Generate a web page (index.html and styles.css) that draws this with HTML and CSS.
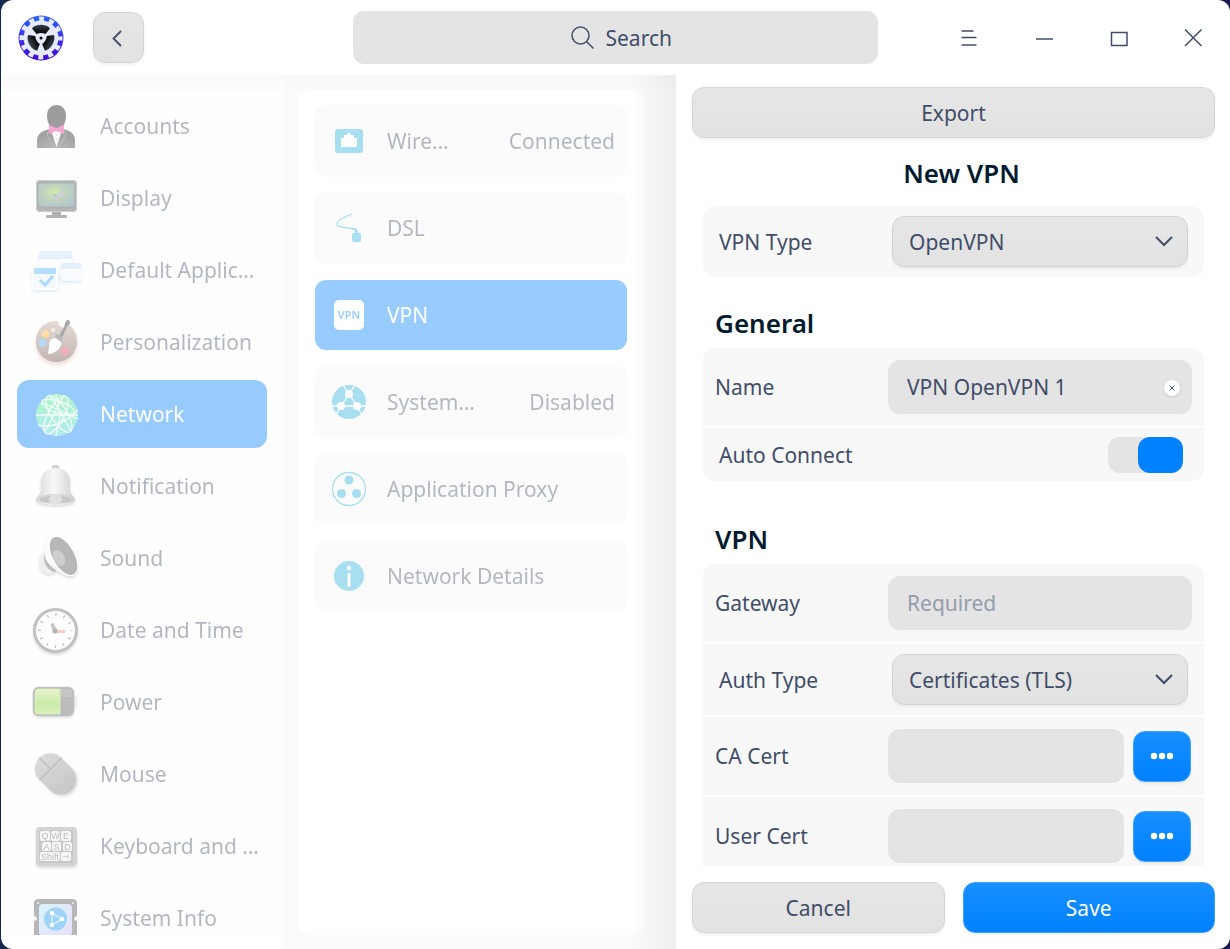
FILE: index.html
```html
<!DOCTYPE html>
<html lang="en">
<head>
  <meta charset="UTF-8">
  <meta name="viewport" content="width=device-width, initial-scale=1.0">
  <title>Control Center - Network</title>
  <link rel="stylesheet" href="styles.css">
</head>
<body>
  <div class="window">
    <header class="titlebar">
      <div class="titlebar-left">
        <svg class="logo" viewBox="0 0 46 46" aria-hidden="true">
          <defs>
            <linearGradient id="logo-ring" x1="0" y1="0" x2="0" y2="1">
              <stop offset="0" stop-color="#2f62ff"/>
              <stop offset="1" stop-color="#4306d8"/>
            </linearGradient>
            <linearGradient id="blade" x1="0" y1="0" x2="0" y2="1">
              <stop offset="0" stop-color="#39424f"/>
              <stop offset="1" stop-color="#000"/>
            </linearGradient>
          </defs>
          <circle cx="23" cy="23" r="22.500" fill="url(#logo-ring)"/>
          <circle cx="23" cy="23" r="18.500" fill="none" stroke="#e6ebfb" stroke-width="6" stroke-dasharray="4.800 4.887" stroke-dashoffset="2.400"/>
          <circle cx="23" cy="23" r="17.500" fill="#e6ebfb"/>
          <path d="M14 13.500C17 8.500 29 8.500 32 13.500L27.500 19C25 17.500 21 17.500 18.500 19Z" fill="url(#blade)"/>
          <path d="M14 13.500C17 8.500 29 8.500 32 13.500L27.500 19C25 17.500 21 17.500 18.500 19Z" fill="url(#blade)" transform="rotate(120 23 23)"/>
          <path d="M14 13.500C17 8.500 29 8.500 32 13.500L27.500 19C25 17.500 21 17.500 18.500 19Z" fill="url(#blade)" transform="rotate(240 23 23)"/>
          <circle cx="23" cy="23" r="1.500" fill="#000"/>
        </svg>
        <button class="btn back-btn" aria-label="Back">
          <svg width="14" height="18" viewBox="0 0 14 18"><path d="M9 2L1.500 9.500L9 17" fill="none" stroke="#414d68" stroke-width="1.800"/></svg>
        </button>
      </div>

      <label class="search">
        <svg width="24" height="24" viewBox="0 0 24 24" aria-hidden="true">
          <circle cx="9.500" cy="9.500" r="8.500"/>
          <path d="M15.500 15.500L22.500 22.500"/>
        </svg>
        <input type="text" placeholder="Search" aria-label="Search">
      </label>

      <div class="window-controls">
        <button aria-label="Menu"><svg width="20" height="20" viewBox="0 0 20 20"><path d="M3.500 3h12M3.500 9.500h15M3.500 17h15"/></svg></button>
        <button aria-label="Minimize"><svg width="20" height="20" viewBox="0 0 20 20"><path d="M3 11h17"/></svg></button>
        <button aria-label="Maximize"><svg width="20" height="20" viewBox="0 0 20 20"><path d="M3.500 4.500h15.500v13h-15.500z"/></svg></button>
        <button aria-label="Close"><svg width="20" height="20" viewBox="0 0 20 20"><path d="M2 1.500l16.500 16.500M18.500 1.500L2 18"/></svg></button>
      </div>
    </header>

    <main class="content">
      <nav class="sidebar" aria-label="Modules">
        <ul class="module-list">
          <li><a href="#accounts" class="module">
            <svg viewBox="0 0 56 56">
              <defs><radialGradient id="suit" cx=".5" cy="1" r=".7"><stop offset="0" stop-color="#555"/><stop offset="1" stop-color="#1c1c1c"/></radialGradient></defs>
              <path d="M9 50V43C9 36 13 33 22 31H35C43 33 47 36 47 43V50Z" fill="url(#suit)"/>
              <path d="M23 32L28.500 49L34 32Z" fill="#fff"/>
              <path d="M22 32C16 35 21 42 28 50M35 32C41 35 36 42 29 50" fill="none" stroke="#666" stroke-width="1"/>
              <path d="M19 18C19 11 23 7 28.500 7S38 11 38 18C38 25 34 32 28.500 32S19 25 19 18Z" fill="#0a0a0a"/>
              <path d="M21 27L28.500 30L36 27V36L28.500 33L21 36Z" fill="#e6268c"/>
              <circle cx="28.500" cy="37" r=".8" fill="#888"/><circle cx="28.500" cy="41" r=".8" fill="#888"/>
            </svg>
            <span>Accounts</span></a></li>
          <li><a href="#display" class="module">
            <svg viewBox="0 0 56 56">
              <defs><radialGradient id="screen" cx=".45" cy=".4" r=".7"><stop offset="0" stop-color="#a2c838"/><stop offset=".5" stop-color="#5f906a"/><stop offset="1" stop-color="#3f7580"/></radialGradient></defs>
              <rect x="24" y="41" width="9" height="6" fill="#3a3a3a"/>
              <rect x="18" y="45" width="21" height="3" rx="1" fill="#444"/>
              <rect x="8" y="10" width="41" height="32" rx="4" fill="#464646"/>
              <rect x="8.500" y="10.500" width="40" height="31" rx="4" fill="none" stroke="#888"/>
              <rect x="10" y="13" width="37" height="24" rx="3" fill="url(#screen)" stroke="#222" stroke-width=".6"/>
              <path d="M24 23L29 25L37 18L34 26L29 28L31 33L26 29Z" fill="#8a84b0"/>
              <path d="M25 23L29 25L28 29Z" fill="#1e9b55"/>
            </svg>
            <span>Display</span></a></li>
          <li><a href="#default-applications" class="module">
            <svg viewBox="0 0 56 56">
              <defs>
                <filter id="soft" x="-30%" y="-30%" width="160%" height="180%"><feDropShadow dx="0" dy="2" stdDeviation="1.500" flood-color="#58a7f5" flood-opacity=".5"/></filter>
                <linearGradient id="pane" x1="0" y1="0" x2="0" y2="1"><stop offset="0" stop-color="#fff"/><stop offset="1" stop-color="#f0f7ff"/></linearGradient>
              </defs>
              <g filter="url(#soft)">
                <rect x="11" y="9" width="33" height="27" rx="3" fill="url(#pane)"/>
                <path d="M11 17V12Q11 9 14 9H41Q44 9 44 12V17Z" fill="#c2dcff"/>
              </g>
              <g filter="url(#soft)">
                <rect x="33" y="21" width="20" height="18" rx="2" fill="url(#pane)"/>
                <path d="M33 27V23Q33 21 35 21H51Q53 21 53 23V27Z" fill="#bddaff"/>
              </g>
              <rect x="4" y="25" width="26" height="23" rx="3" fill="#fff" filter="url(#soft)"/>
              <rect x="6" y="26" width="22" height="20" fill="#e7f4ff"/>
              <rect x="6" y="26" width="22" height="6" fill="#48adff"/>
              <path d="M12 38L17 43L25 34" fill="none" stroke="#3aa6ff" stroke-width="3"/>
            </svg>
            <span>Default Applic…</span></a></li>
          <li><a href="#personalization" class="module">
            <svg viewBox="0 0 56 56">
              <defs>
                <linearGradient id="wood" x1="0" y1="0" x2="0" y2="1"><stop offset="0" stop-color="#c0a798"/><stop offset="1" stop-color="#684b43"/></linearGradient>
                <filter id="warm" x="-20%" y="-20%" width="140%" height="160%"><feDropShadow dx="0" dy="3" stdDeviation="2" flood-color="#b0593a" flood-opacity=".5"/></filter>
              </defs>
              <path d="M28 7C16 7 8 16 8 27.500S17 48 28.500 48S49 39 49 27.500C49 18 44 12 38 9C39 13 36 15 33 13S31 7 28 7Z" fill="url(#wood)" filter="url(#warm)"/>
              <circle cx="25" cy="16" r="3" fill="#d8c5ba" stroke="#8d7163" stroke-width=".6"/>
              <circle cx="17.500" cy="20" r="3.800" fill="#ffae22"/>
              <circle cx="14.500" cy="29" r="3.800" fill="#4ba9f2"/>
              <circle cx="37" cy="37" r="4" fill="#ee3565"/>
              <path d="M31 22L36.500 12L37 9L38.500 6.500Q40 5 41.500 7T41 11L39 13L34 24Z" fill="#2b2b2b"/>
              <path d="M28 20L35 23L33 29L27 25Z" fill="#555"/>
              <path d="M28 24C22 24 21 28 21 32C21 36 20 38 20 40C27 40 34 34 33 28Z" fill="#fff"/>
            </svg>
            <span>Personalization</span></a></li>
          <li><a href="#network" class="module active" aria-current="page">
            <svg viewBox="0 0 56 56">
              <defs><linearGradient id="globe" x1="0" y1="0" x2="0" y2="1"><stop offset="0" stop-color="#36e97e"/><stop offset="1" stop-color="#3fcfd7"/></linearGradient></defs>
              <circle cx="29" cy="29" r="21" fill="url(#globe)"/>
              <g fill="none" stroke="#fff" stroke-width="1.300" opacity=".85">
                <ellipse cx="28" cy="29" rx="8" ry="21" transform="rotate(28 28 29)"/>
                <ellipse cx="31" cy="28" rx="8" ry="21" transform="rotate(-32 31 28)"/>
                <ellipse cx="30" cy="21" rx="17" ry="6" transform="rotate(18 30 21)"/>
                <path d="M8 29H50M28 8L32 30L28 50M13 16L50 33M10 39Q30 44 50 24M22 9L43 45M36 9L17 46"/>
              </g>
            </svg>
            <span>Network</span></a></li>
          <li><a href="#notification" class="module">
            <svg viewBox="0 0 56 56">
              <defs>
                <linearGradient id="bell"><stop offset="0" stop-color="#a0a0a0"/><stop offset=".45" stop-color="#f0f0f0"/><stop offset="1" stop-color="#8c8c8c"/></linearGradient>
                <filter id="shade" x="-20%" y="-20%" width="140%" height="160%"><feDropShadow dx="0" dy="2" stdDeviation="1.500" flood-opacity=".35"/></filter>
              </defs>
              <ellipse cx="27.500" cy="10" rx="4" ry="3" fill="#888"/>
              <path d="M8 42C8 38 13 38 13 30V24C13 15 19 10 27.500 10S42 15 42 24V30C42 38 47 38 47 42C47 48 8 48 8 42Z" fill="url(#bell)" filter="url(#shade)"/>
              <ellipse cx="27.500" cy="41.500" rx="16" ry="4" fill="#777"/>
              <path d="M10 42C10 35 45 35 45 42" fill="none" stroke="#999" stroke-width="1.500"/>
              <ellipse cx="27.500" cy="41.500" rx="6.500" ry="5.500" fill="#b5b5b5"/>
            </svg>
            <span>Notification</span></a></li>
          <li><a href="#sound" class="module">
            <svg viewBox="0 0 56 56">
              <defs><linearGradient id="cone"><stop offset="0" stop-color="#fff"/><stop offset="1" stop-color="#bbb"/></linearGradient></defs>
              <g filter="url(#shade)">
                <path d="M15 23C9 27 9 42 21 44L27 41L20 24Z" fill="#dcdce4"/>
                <path d="M18 22C13 28 18 41 27 42L29 39L22 22Z" fill="#5c5c5c"/>
                <path d="M21 6C16 15 16 24 18 30C24 40 35 46 46 45Z" fill="url(#cone)"/>
                <ellipse cx="35" cy="26" rx="11.500" ry="22" transform="rotate(-29 35 26)" fill="#fff"/>
              </g>
              <ellipse cx="35.500" cy="26" rx="10.500" ry="21" transform="rotate(-29 35.500 26)" fill="#505050"/>
              <ellipse cx="31" cy="28" rx="5.500" ry="8.500" transform="rotate(-29 31 28)" fill="#888"/>
            </svg>
            <span>Sound</span></a></li>
          <li><a href="#datetime" class="module">
            <svg viewBox="0 0 56 56">
              <circle cx="27.500" cy="28.500" r="21" fill="#fff" stroke="#686868" stroke-width="3" filter="url(#shade)"/>
              <!-- hour marks -->
              <circle cx="27.500" cy="28.500" r="16" fill="none" stroke="#444" stroke-width="3" stroke-dasharray="1 7.378" stroke-dashoffset=".5"/>
              <path d="M27 29L24.500 23" stroke="#777" stroke-width="4" stroke-linecap="round"/>
              <path d="M27 29.500H37" stroke="#ff8080" stroke-width="3"/>
              <circle cx="27" cy="29" r="2.500" fill="#444"/>
            </svg>
            <span>Date and Time</span></a></li>
          <li><a href="#power" class="module">
            <svg viewBox="0 0 56 56">
              <defs><linearGradient id="charge" x1="0" y1="0" x2="0" y2="1"><stop offset="0" stop-color="#c9e47c"/><stop offset=".6" stop-color="#81d030"/><stop offset="1" stop-color="#a0df55"/></linearGradient></defs>
              <rect x="42" y="22" width="7" height="12" rx="4" fill="#e0e0e0" stroke="#bbb" stroke-width=".6"/>
              <rect x="5.500" y="13.500" width="40" height="28" rx="5" fill="#595959" filter="url(#shade)"/>
              <rect x="32" y="15" width="12" height="8" fill="#888" opacity=".6"/>
              <path d="M32 15V40H10Q7 40 7 37V18Q7 15 10 15Z" fill="url(#charge)" stroke="#a9dd55" stroke-width="1"/>
              <rect x="5.500" y="13.500" width="40" height="28" rx="5" fill="none" stroke="#666" stroke-width="1.500"/>
            </svg>
            <span>Power</span></a></li>
          <li><a href="#mouse" class="module">
            <svg viewBox="0 0 56 56">
              <defs><linearGradient id="mouse-body" x1="0" y1="0" x2="0" y2="1"><stop offset="0" stop-color="#a8a8a8"/><stop offset="1" stop-color="#767676"/></linearGradient></defs>
              <g transform="rotate(-45 27.500 28)">
                <rect x="12" y="5" width="31" height="46" rx="15.500" fill="url(#mouse-body)" filter="url(#shade)"/>
                <path d="M12 21H43M27.500 5V21" stroke="#606060" stroke-width="1.500"/>
              </g>
            </svg>
            <span>Mouse</span></a></li>
          <li><a href="#keyboard" class="module">
            <svg viewBox="0 0 56 56">
              <rect x="8" y="9" width="41" height="39" rx="4" fill="#969696" filter="url(#shade)"/>
              <rect x="11" y="12" width="34" height="33" rx="2" fill="#7a7a7a"/>
              <g fill="#ededed">
                <rect x="12" y="13" width="10" height="10" rx="2"/><rect x="23" y="13" width="9" height="10" rx="2"/><rect x="33" y="13" width="10" height="10" rx="2"/>
                <rect x="14" y="24" width="9" height="9" rx="2"/><rect x="24" y="24" width="9" height="9" rx="2"/><rect x="35" y="24" width="9" height="9" rx="2"/>
                <rect x="12" y="34" width="20" height="9" rx="2"/><rect x="33" y="34" width="10" height="9" rx="2"/>
              </g>
              <g class="key-text">
                <text x="17" y="21">Q</text><text x="27.500" y="21">W</text><text x="38" y="21">E</text>
                <text x="18.500" y="32">A</text><text x="28.500" y="32">S</text><text x="39.500" y="32">D</text>
                <text x="22" y="42">Shift</text>
              </g>
              <path d="M35 38.500H41M39 37L41 38.500L39 40" fill="none" stroke="#777" stroke-width=".8"/>
            </svg>
            <span>Keyboard and …</span></a></li>
          <li><a href="#systeminfo" class="module">
            <svg viewBox="0 0 56 56">
              <defs><linearGradient id="chip" x1="0" y1="0" x2="1" y2="1"><stop offset="0" stop-color="#a5e4f7"/><stop offset="1" stop-color="#cbb3fa"/></linearGradient></defs>
              <path d="M11 9H44Q49 9 49 13V26Q46 27 46 28.500T49 31V50H6V31Q9 30 9 28.500T6 26V13Q6 9 11 9Z" fill="#4f4f4f"/>
              <rect x="11" y="14" width="33" height="32" rx="4" fill="url(#chip)"/>
              <circle cx="10" cy="13" r="1" fill="#ddd"/><circle cx="45" cy="13" r="1" fill="#ddd"/>
              <circle cx="27.500" cy="29" r="11.500" fill="#0f96ef"/>
              <path d="M24 23L34 29L24 35Z" fill="none" stroke="#8fd0fb" stroke-width="1.500"/>
              <circle cx="24" cy="23" r="2.200" fill="#fff"/><circle cx="34" cy="29" r="2.200" fill="#fff"/><circle cx="24" cy="35" r="2.200" fill="#fff"/>
            </svg>
            <span>System Info</span></a></li>
        </ul>
      </nav>

      <section class="network-pane" aria-label="Network">
        <div class="network-card">
          <ul class="network-list">
            <li><a href="#wired" class="network-item">
              <svg viewBox="0 0 36 36">
                <rect x="4" y="6" width="28" height="24" rx="3"/>
                <path class="cut" d="M10 24V15H13V12H16V11Q18 9 20 11V12H23V15H26V24Z"/>
              </svg>
              <span>Wire…</span><span class="status">Connected</span></a></li>
            <li><a href="#dsl" class="network-item">
              <svg viewBox="0 0 36 36">
                <path class="line" d="M21 4C13 7 6 11 6 14C6 18 16 17 22 19"/>
                <path d="M20 17.500C26 18 27 19 27 24H24C24 20 23 19.500 20 19Z"/>
                <rect x="21" y="23" width="9" height="9" rx="2"/>
              </svg>
              <span>DSL</span></a></li>
            <li><a href="#vpn" class="network-item active" aria-current="page">
              <svg viewBox="0 0 36 36">
                <rect x="3" y="3" width="30" height="30" rx="5"/>
                <text class="vpn-text" x="18" y="22">VPN</text>
              </svg>
              <span>VPN</span></a></li>
            <li><a href="#system-proxy" class="network-item">
              <svg viewBox="0 0 36 36">
                <circle cx="18" cy="18" r="17"/>
                <path class="cut-line" d="M18 10L10 22M18 10L26 22M1 22H35M18 10L12 1M18 10L24 1M10 22L5 31M26 22L31 31"/>
                <circle class="cut" cx="18" cy="10" r="4"/><circle class="cut" cx="10" cy="22" r="4"/><circle class="cut" cx="26" cy="22" r="4"/>
              </svg>
              <span>System…</span><span class="status">Disabled</span></a></li>
            <li><a href="#app-proxy" class="network-item">
              <svg viewBox="0 0 36 36">
                <circle class="line" cx="18" cy="18" r="16.500"/>
                <path class="link" d="M18 9L11 23H26Z"/>
                <circle cx="18" cy="9" r="4.500"/><circle cx="10.500" cy="22.500" r="4.500"/><circle cx="25.500" cy="22.500" r="4.500"/>
              </svg>
              <span>Application Proxy</span></a></li>
            <li><a href="#details" class="network-item">
              <svg viewBox="0 0 36 36">
                <circle cx="18" cy="18" r="15"/>
                <circle class="cut" cx="18" cy="10" r="2.200"/>
                <rect class="cut" x="16.500" y="15" width="3" height="14" rx="1"/>
              </svg>
              <span>Network Details</span></a></li>
          </ul>
        </div>
      </section>

      <form class="vpn-form">
        <button type="button" class="btn">Export</button>

        <div class="form-scroll">
          <h1>New VPN</h1>
          <div class="group">
            <div class="row select-row">
              <label for="vpn-type">VPN Type</label>
              <div class="select-wrap">
                <select id="vpn-type" class="btn"><option>OpenVPN</option><option>L2TP</option><option>PPTP</option></select>
                <svg width="18" height="12" viewBox="0 0 18 12"><path d="M1 1l8 8 8-8"/></svg>
              </div>
            </div>
          </div>

          <h2>General</h2>
          <div class="group">
            <div class="row">
              <label for="name">Name</label>
              <div class="input-wrap">
                <input type="text" id="name" value="VPN OpenVPN 1">
                <button type="button" class="clear-btn" aria-label="Clear"><svg width="6" height="6" viewBox="0 0 6 6"><path d="M.5 .5l5 5M5.500 .5l-5 5"/></svg></button>
              </div>
            </div>
            <div class="row switch-row">
              <label for="auto-connect">Auto Connect</label>
              <input type="checkbox" id="auto-connect" class="switch" checked>
            </div>
          </div>

          <h2 class="spaced">VPN</h2>
          <div class="group">
            <div class="row">
              <label for="gateway">Gateway</label>
              <input type="text" id="gateway" placeholder="Required">
            </div>
            <div class="row select-row">
              <label for="auth-type">Auth Type</label>
              <div class="select-wrap">
                <select id="auth-type" class="btn"><option>Certificates (TLS)</option><option>Password</option></select>
                <svg width="18" height="12" viewBox="0 0 18 12"><path d="M1 1l8 8 8-8"/></svg>
              </div>
            </div>
            <div class="row file-row">
              <label for="ca-cert">CA Cert</label>
              <input type="text" id="ca-cert">
              <button type="button" class="btn primary file-btn" aria-label="Choose CA Cert"><svg width="24" height="8" viewBox="0 0 24 8"><circle cx="4" cy="4" r="3.200"/><circle cx="12" cy="4" r="3.200"/><circle cx="20" cy="4" r="3.200"/></svg></button>
            </div>
            <div class="row file-row">
              <label for="user-cert">User Cert</label>
              <input type="text" id="user-cert">
              <button type="button" class="btn primary file-btn" aria-label="Choose User Cert"><svg width="24" height="8" viewBox="0 0 24 8"><circle cx="4" cy="4" r="3.200"/><circle cx="12" cy="4" r="3.200"/><circle cx="20" cy="4" r="3.200"/></svg></button>
            </div>
          </div>
        </div>

        <div class="actions">
          <button type="button" class="btn">Cancel</button>
          <button type="submit" class="btn primary">Save</button>
        </div>
      </form>
    </main>
  </div>
</body>
</html>
```
FILE: styles.css
```css
* {
  box-sizing: border-box;
}

body {
  margin: 0;
  background: linear-gradient(90deg, #14284b, #1a1650);
  color: #414d68;
  font-family: "Noto Sans", "Open Sans", sans-serif;
  font-size: 21px;
  line-height: 28px;
}

ul {
  list-style: none;
  margin: 0;
  padding: 0;
}

a {
  color: inherit;
  text-decoration: none;
}

button, input, select {
  font: inherit;
  color: inherit;
}

svg {
  display: block;
  flex: none;
}

.window {
  display: flex;
  flex-direction: column;
  height: 100vh;
  margin-left: 1px;
  border-radius: 12px;
  background: #fff;
  overflow: hidden;
}

/* Title bar */
.titlebar {
  display: grid;
  grid-template-columns: 1fr minmax(200px, 525px) 1fr;
  flex: none;
  align-items: center;
  height: 75px;
}

.titlebar-left {
  display: flex;
  align-items: center;
  gap: 29px;
  padding-left: 17px;
}

.logo {
  width: 46px;
  height: 46px;
}

.btn {
  display: flex;
  align-items: center;
  justify-content: center;
  height: 51px;
  padding: 0 16px;
  border: 1px solid #d4d4d4;
  border-radius: 12px;
  background: linear-gradient(#e6e6e6, #e2e2e2);
  box-shadow: 0 2px 3px rgba(0, 0, 0, 0.06);
}

.primary {
  border-color: #3d9eff;
  background: linear-gradient(#188fff, #0081ff);
  color: #fff;
}

.back-btn {
  width: 51px;
  padding: 0;
}

.search {
  display: flex;
  align-items: center;
  justify-content: center;
  gap: 11px;
  height: 53px;
  padding-left: 13px;
  border-radius: 11px;
  background: #e4e4e4;
}

.search input {
  width: 68px;
  padding: 0;
  border: 0;
  background: none;
}

.search input::placeholder {
  color: #414d68;
  opacity: 1;
}

.search svg,
.window-controls svg,
.select-wrap svg,
.clear-btn svg {
  fill: none;
  stroke: #414d68;
}

.search svg,
.window-controls svg {
  stroke-width: 1.5;
}

.window-controls {
  display: flex;
  justify-content: flex-end;
}

.window-controls button {
  display: flex;
  align-items: center;
  justify-content: center;
  width: 75px;
  height: 75px;
  padding: 0;
  border: 0;
  background: none;
}

/* Content */
.content {
  display: flex;
  flex: 1;
  min-height: 0;
}

.sidebar {
  flex: none;
  width: 282px;
  padding: 17px 16px 0;
  margin-bottom: 14px;
  background: linear-gradient(#fafafa, #fefefe 24px);
  overflow: hidden;
}

.module-list,
.network-list {
  display: flex;
  flex-direction: column;
  opacity: 0.4;
}

.module-list {
  gap: 4px;
}

.module {
  display: flex;
  align-items: center;
  gap: 16px;
  height: 68px;
  padding-left: 11px;
  border-radius: 12px;
  white-space: nowrap;
}

.module svg {
  width: 56px;
  height: 56px;
}

.module.active,
.network-item.active {
  background: #0081ff;
  color: #fff;
}

.key-text {
  font-family: "Liberation Sans", sans-serif;
  font-size: 9px;
  fill: #555;
  text-anchor: middle;
}

.network-pane {
  position: relative;
  flex: 1 1 393px;
  min-width: 0;
  padding: 15px 32px 14px 15px;
  background: linear-gradient(#f8f8f8, #fbfbfb 16px);
}

.network-pane::after {
  content: "";
  position: absolute;
  top: 0;
  right: 0;
  bottom: 0;
  width: 48px;
  background: linear-gradient(90deg, transparent, rgba(0, 0, 0, 0.05));
}

.network-card {
  height: 100%;
  padding: 15px 16px;
  border-radius: 12px;
  background: #fff;
}

.network-list {
  gap: 15px;
}

.network-item {
  display: flex;
  align-items: center;
  gap: 20px;
  height: 72px;
  padding: 0 12px 0 16px;
  border: 1px solid transparent;
  border-radius: 12px;
  background: #f7f7f7;
}

.network-item.active {
  background-clip: padding-box;
}

.network-item svg {
  width: 36px;
  height: 36px;
  fill: #26afdc;
}

.network-item.active svg {
  fill: #fff;
}

.network-item .status {
  margin-left: auto;
}

.network-item .cut {
  fill: #fff;
}

.network-item .line {
  fill: none;
  stroke: #26afdc;
  stroke-width: 1.3;
}

.network-item .cut-line {
  fill: none;
  stroke: #fff;
  stroke-width: 1.3;
}

.network-item .link {
  fill: none;
  stroke: #d5eef6;
}

.network-item .vpn-text {
  font-size: 11px;
  font-weight: 600;
  fill: #0081ff;
  text-anchor: middle;
}

/* VPN form */
.vpn-form {
  display: flex;
  flex: 1 1 554px;
  flex-direction: column;
  min-width: 0;
  padding: 12px 15px 16px 16px;
}

.form-scroll {
  flex: 1;
  min-height: 0;
  margin-bottom: 16px;
  padding: 0 11px;
  overflow: hidden;
}

h1, h2 {
  margin: 0;
  color: #001a2e;
  font-size: 26px;
  font-weight: 600;
  line-height: 34px;
}

h1 {
  padding: 18px 0 16px 16px;
  text-align: center;
}

h2 {
  padding: 29px 12px 8px;
}

h2.spaced {
  padding-top: 41px;
}

.group {
  display: flex;
  flex-direction: column;
  gap: 2px;
  border-radius: 12px;
  overflow: hidden;
}

.row {
  display: flex;
  align-items: center;
  height: 78px;
  padding: 0 12px;
  background: #f8f8f8;
}

.row label {
  flex: none;
  width: 173px;
}

.select-row {
  height: 71px;
  padding: 0 16px;
}

.switch-row {
  justify-content: space-between;
  height: 53px;
  padding: 0 21px 0 16px;
}

.file-row {
  padding-right: 13px;
}

.row input[type="text"] {
  flex: 1;
  min-width: 0;
  width: 100%;
  height: 54px;
  padding: 0 19px;
  border: 0;
  border-radius: 12px;
  background: #e4e4e4;
}

.row input::placeholder {
  color: #959cab;
  opacity: 1;
}

.input-wrap,
.select-wrap {
  position: relative;
  display: flex;
  flex: 1;
}

.select-wrap select {
  width: 100%;
  padding: 0 16px;
  appearance: none;
}

.select-wrap svg {
  position: absolute;
  top: 20px;
  right: 15px;
  stroke-width: 2;
  pointer-events: none;
}

.clear-btn {
  position: absolute;
  top: 20px;
  right: 12px;
  display: flex;
  align-items: center;
  justify-content: center;
  width: 16px;
  height: 16px;
  padding: 0;
  border: 0;
  border-radius: 50%;
  background: #fff;
  box-shadow: 0 1px 3px rgba(0, 0, 0, 0.12);
}

.switch {
  width: 75px;
  height: 36px;
  margin: 0;
  border-radius: 12px;
  background: #e4e4e4;
  appearance: none;
}

.switch::before {
  content: "";
  display: block;
  width: 45px;
  height: 36px;
  border-radius: 12px;
  background: #b0b0b0;
}

.switch:checked::before {
  margin-left: auto;
  background: #0081ff;
}

.file-btn {
  flex: none;
  width: 58px;
  margin-left: 9px;
  padding: 0;
}

.file-btn svg {
  fill: #fff;
}

.actions {
  display: flex;
  gap: 18px;
}

.actions .btn {
  flex: 1;
}
```
